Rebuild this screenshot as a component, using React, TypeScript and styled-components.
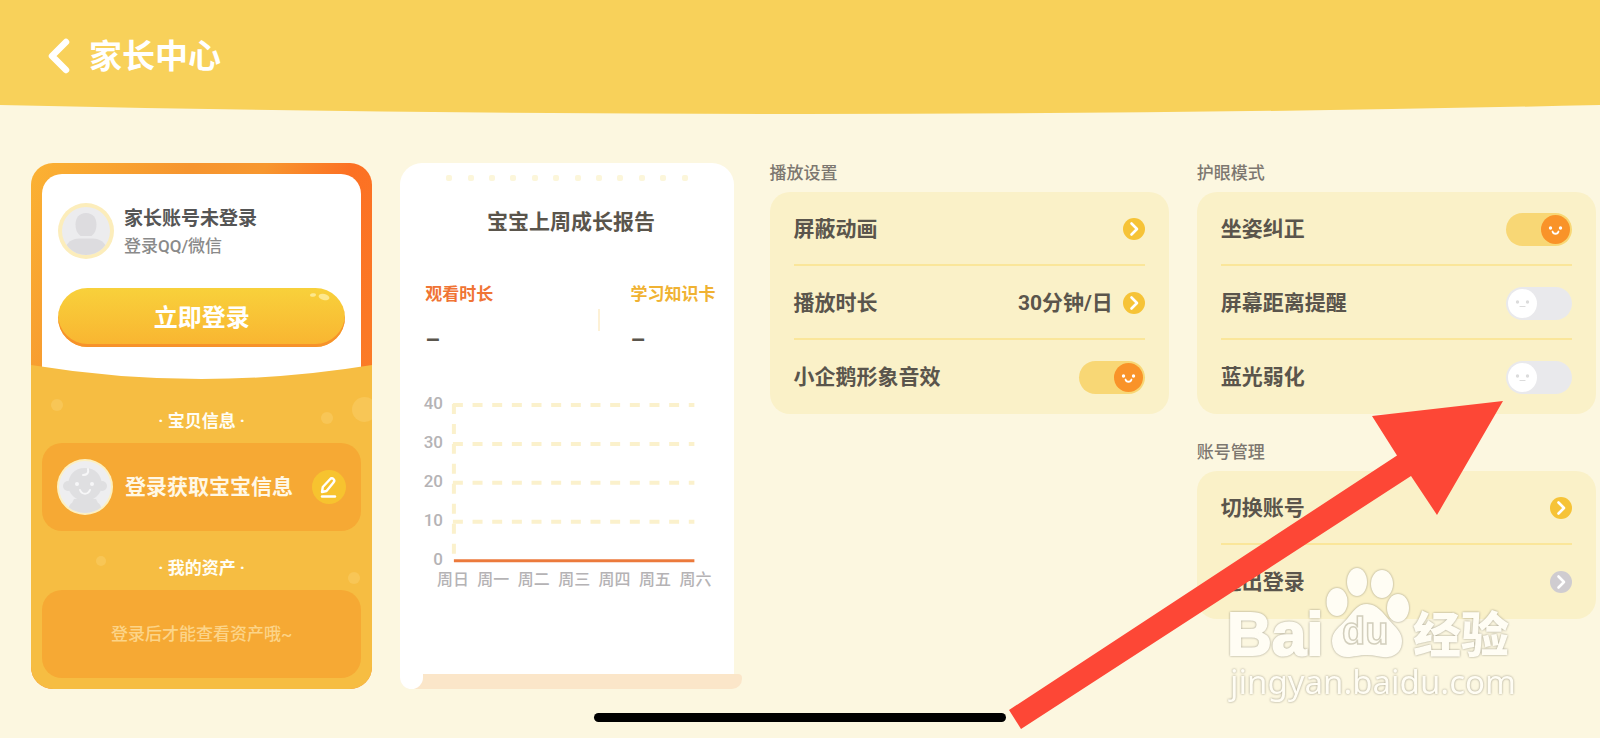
import React, { useState } from "react";
import styled, { createGlobalStyle } from "styled-components";

const GlobalStyle = createGlobalStyle`
  *, *::before, *::after { box-sizing: border-box; }
  body {
    margin: 0;
    background: #fcf7e0;
    font-family: Roboto, "Noto Sans CJK SC", sans-serif;
    color: #5a554c;
  }
  button {
    border: 0;
    padding: 0;
    margin: 0;
    background: none;
    font: inherit;
    color: inherit;
    cursor: pointer;
  }
  h1, h2, h3, p { margin: 0; }
`;

const Page = styled.div`
  position: relative;
  display: flex;
  flex-direction: column;
  min-height: 100vh;
  overflow: hidden;
`;

const Header = styled.header`
  display: flex;
  align-items: center;
  gap: 18px;
  height: 105px;
  padding: 6px 47px 0;
  background: #f8d15a;
`;

const BackButton = styled.button`
  display: flex;
`;

const PageTitle = styled.h1`
  padding-top: 3px;
  font-size: 33px;
  line-height: 40px;
  font-weight: 700;
  color: #fff;
`;

const HeaderCurve = styled.svg`
  display: block;
  width: 100%;
  height: 9px;
  fill: #f8d15a;
`;

const Columns = styled.main`
  display: grid;
  grid-template-columns: 342fr 342fr 400fr 400fr;
  column-gap: 28px;
  flex: 1;
  align-items: start;
  padding: 49px 4px 24px 31px;
`;

/* Account card */

const AccountCard = styled.section`
  overflow: hidden;
  border-radius: 22px;
  background: linear-gradient(118deg, #fbb233 0%, #f6952f 26%, #f7972f 38%, #fc7023 52%, #f98a2c 100%);
`;

const AccountPanel = styled.div`
  margin: 11px 11px 0;
  padding: 29px 16px 32px;
  border-radius: 20px 20px 0 0;
  background: #fff;
`;

const Profile = styled.div`
  display: flex;
  align-items: center;
  gap: 10px;
  margin-bottom: 29px;
`;

const ProfileText = styled.div`
  display: flex;
  flex-direction: column;
  gap: 2px;
  padding-top: 2px;
`;

const ProfileName = styled.h2`
  font-size: 19px;
  line-height: 26px;
  font-weight: 700;
  color: #555;
`;

const ProfileHint = styled.p`
  font-size: 17px;
  line-height: 24px;
  font-weight: 500;
  color: #8a8a8a;
`;

const LoginButton = styled.button`
  position: relative;
  display: block;
  width: 100%;
  height: 59px;
  border-radius: 30px;
  background: linear-gradient(#f8d13b, #f9b431);
  box-shadow: inset 0 -3px 0 #f7922b;
  font-size: 24px;
  line-height: 32px;
  font-weight: 700;
  color: #fff;
`;

const Shine = styled.svg`
  position: absolute;
  top: 3px;
  right: 14px;
`;

const CardCurve = styled.svg`
  position: relative;
  display: block;
  width: 100%;
  height: 14px;
  margin-top: -14px;
  fill: #f6bd42;
`;

const AccountBody = styled.div`
  position: relative;
  display: flex;
  flex-direction: column;
  padding: 30px 11px 11px;
  background: #f6bd42;
`;

const Bubble = styled.span<{ $x: string; $y: number; $size: number }>`
  position: absolute;
  left: ${(p) => p.$x};
  top: ${(p) => p.$y}px;
  width: ${(p) => p.$size}px;
  height: ${(p) => p.$size}px;
  border-radius: 50%;
  background: #f8c656;
`;

const BodyHeading = styled.h3`
  margin-bottom: 10px;
  text-align: center;
  font-size: 17px;
  line-height: 24px;
  font-weight: 700;
  color: #fffdf4;
`;

const BodyBox = styled.div`
  display: flex;
  align-items: center;
  height: 88px;
  padding: 0 15px;
  border-radius: 20px;
  background: #f6a934;

  & + ${BodyHeading} {
    margin-top: 25px;
  }
`;

const BabyText = styled.p`
  flex: 1;
  margin-left: 12px;
  font-size: 21px;
  line-height: 28px;
  font-weight: 700;
  color: #fff8e6;
  white-space: nowrap;
`;

const EmptyText = styled.p`
  flex: 1;
  text-align: center;
  font-size: 17px;
  line-height: 24px;
  font-weight: 500;
  color: #fcd488;
`;

const EditButton = styled.button`
  display: flex;
  align-items: center;
  justify-content: center;
  width: 34px;
  height: 34px;
  border-radius: 50%;
  background: #f7c32f;
`;

/* Report card */

const ReportCard = styled.section`
  align-self: start;
  display: flex;
  flex-direction: column;
`;

const Paper = styled.div`
  height: 511px;
  margin-right: 8px;
  padding-top: 12px;
  border-radius: 22px 22px 0 0;
  background: #fff;
`;

const PaperRoll = styled.div`
  height: 15px;
  border-radius: 0 4px 10px 12px;
  background: #fbe6c9;
`;

const PaperTab = styled.div`
  width: 23px;
  height: 15px;
  border-radius: 0 0 12px 12px;
  background: #fff;
`;

const PaperHoles = styled.div`
  display: flex;
  justify-content: space-between;
  padding: 0 46px;
`;

const Hole = styled.span`
  width: 6px;
  height: 6px;
  border-radius: 2px;
  background: #fcf6da;
`;

const ReportTitle = styled.h2`
  margin: 26px 0 45px;
  padding-left: 8px;
  text-align: center;
  font-size: 21px;
  line-height: 30px;
  font-weight: 700;
`;

const Metrics = styled.div`
  display: flex;
  padding: 0 18px 0 25px;
`;

const Metric = styled.div`
  display: flex;
  flex-direction: column;
  gap: 19px;
`;

const MetricLabel = styled.span<{ $color: string }>`
  font-size: 17px;
  line-height: 24px;
  font-weight: 700;
  color: ${(p) => p.$color};
`;

const MetricValue = styled.span`
  padding-left: 1px;
  font-family: "Liberation Sans", sans-serif;
  font-size: 24px;
  line-height: 26px;
  font-weight: 700;
`;

const MetricDivider = styled.span`
  width: 2px;
  height: 22px;
  margin: 27px 31px 0 auto;
  background: #fdf1d6;
`;

const Chart = styled.svg`
  display: block;
  width: 100%;
  margin-top: 39px;

  text {
    fill: #b5b3b5;
    font-size: 17px;
    font-weight: 500;
  }
  .day {
    font-size: 16px;
  }
`;

/* Settings */

const SettingsColumn = styled.div`
  display: flex;
  flex-direction: column;
  gap: 28px;
`;

const GroupTitle = styled.h2`
  margin-bottom: 9px;
  font-size: 17px;
  line-height: 20px;
  font-weight: 500;
  color: #7d7770;
`;

const Group = styled.div`
  padding: 0 24px;
  border-radius: 20px;
  background: #faf1c8;
`;

const rowStyle = `
  display: flex;
  align-items: center;
  gap: 10px;
  width: 100%;
  height: 74px;
  font-size: 21px;
  line-height: 28px;
  font-weight: 700;
  text-align: left;
  cursor: pointer;

  &:not(:last-child) {
    padding-top: 2px;
    border-bottom: 2px solid #fae69a;
  }
`;

const LinkRow = styled.button`
  ${rowStyle}
`;

const SwitchRow = styled.label`
  ${rowStyle}
`;

const RowLabel = styled.span`
  flex: 1;
`;

const Switch = styled.span`
  display: grid;
  width: 66px;
  height: 33px;
`;

const SwitchInput = styled.input`
  grid-area: 1 / 1;
  appearance: none;
  width: 66px;
  height: 33px;
  margin: 0;
  border-radius: 17px;
  background: #e9e9ec;
  cursor: pointer;

  &:checked {
    background: #f8d775;
  }
`;

const Knob = styled.svg<{ $on: boolean }>`
  grid-area: 1 / 1;
  align-self: center;
  justify-self: ${(p) => (p.$on ? "end" : "start")};
  margin: 0 2px;
  pointer-events: none;
`;

const HomeIndicator = styled.div`
  width: 412px;
  height: 9px;
  margin: 0 auto 16px;
  border-radius: 5px;
  background: #000;
`;

/* Overlays */

const Arrow = styled.svg`
  position: absolute;
  left: 1008px;
  top: 400px;
  pointer-events: none;
`;

const Watermark = styled.svg`
  position: absolute;
  left: 1220px;
  top: 560px;
  pointer-events: none;
  filter: drop-shadow(0 0 1px rgba(120, 116, 100, 0.7));

  text {
    fill: #fffdf4;
  }
`;

const ParentAvatar = () => (
  <svg width="56" height="56" viewBox="0 0 56 56" aria-hidden="true">
    <clipPath id="parent-clip">
      <circle cx="28" cy="28" r="24" />
    </clipPath>
    <circle cx="28" cy="28" r="28" fill="#fcedbb" />
    <circle cx="28" cy="28" r="24" fill="#ececee" />
    <g clipPath="url(#parent-clip)" fill="#dddcdf">
      <path d="M28 10c-7 0-10.500 5-10.500 11.500 0 5 1.500 9 5 11.500h11c3.500-2.500 5-6.500 5-11.500C38.500 15 35 10 28 10z" />
      <path d="M7 46c2-7 7-10 14-10.500h14c7 .5 12 3.500 14 10.500v10H7z" />
    </g>
  </svg>
);

const BabyAvatar = () => (
  <svg width="56" height="56" viewBox="0 0 56 56" aria-hidden="true">
    <clipPath id="baby-clip">
      <circle cx="28" cy="28" r="26" />
    </clipPath>
    <circle cx="28" cy="28" r="28" fill="#fdf0c0" />
    <circle cx="28" cy="28" r="26" fill="#eeeef0" />
    <g clipPath="url(#baby-clip)">
      <g fill="#dfdfe1">
        <path d="M17 40h22l2 4c4 1 4 12 4 12H11s0-11 4-12z" />
        <circle cx="11" cy="27" r="5" />
        <circle cx="45" cy="27" r="5" />
        <path d="M28 9C17 9 12 16 11 25c0 10 8 17 17 17s17-7 17-17C44 16 39 9 28 9z" />
      </g>
      <g fill="none" stroke="#f7f7f8" strokeLinecap="round" strokeWidth="2">
        <path d="M26 16c4 0 6-2 5-6" />
        <path d="M23 31c2 5 8 5 10 0" />
      </g>
      <circle cx="20" cy="25" r="2" fill="#f7f7f8" />
      <circle cx="35" cy="25" r="2" fill="#f7f7f8" />
    </g>
  </svg>
);

const ChevronBadge = ({ color = "#f6c337" }: { color?: string }) => (
  <svg width="22" height="22" viewBox="0 0 22 22" aria-hidden="true">
    <circle cx="11" cy="11" r="11" fill={color} />
    <path d="M8.500 5.500L14 11l-5.500 5.500" fill="none" stroke="#fff" strokeWidth="2.600" strokeLinecap="round" strokeLinejoin="round" />
  </svg>
);

const ToggleRow = ({ label, initial }: { label: string; initial: boolean }) => {
  const [on, setOn] = useState(initial);
  return (
    <SwitchRow>
      <RowLabel>{label}</RowLabel>
      <Switch>
        <SwitchInput type="checkbox" role="switch" checked={on} onChange={() => setOn(!on)} />
        <Knob $on={on} width="29" height="29" viewBox="0 0 29 29" aria-hidden="true">
          <circle cx="14.500" cy="14.500" r="14.500" fill={on ? "#f99329" : "#fff"} />
          <g fill={on ? "#fff" : "#dcdcdc"}>
            <circle cx="9.500" cy="13" r="1.700" />
            <circle cx="19.500" cy="13" r="1.700" />
          </g>
          <path
            d={on ? "M11.500 16.500c.8 3 5.200 3 6 0" : "M12 17.500h5"}
            fill="none"
            stroke={on ? "#fff" : "#dcdcdc"}
            strokeWidth={on ? 1.8 : 1.2}
            strokeLinecap="round"
          />
        </Knob>
      </Switch>
    </SwitchRow>
  );
};

const ticks = [40, 30, 20, 10, 0];
const days = ["周日", "周一", "周二", "周三", "周四", "周五", "周六"];

const WeekChart = () => (
  <Chart viewBox="0 0 334 210" role="img" aria-label="宝宝上周成长报告">
    {ticks.map((tick, i) => (
      <text key={tick} x="43" y={19 + i * 39} textAnchor="end">
        {tick}
      </text>
    ))}
    <g fill="none" stroke="#fbf1cc" strokeWidth="4">
      {ticks.slice(0, 4).map((tick, i) => (
        <path key={tick} d={`M53 ${15 + i * 39}H295`} strokeDasharray="10 9.700" />
      ))}
      <path d="M54 14V171" strokeDasharray="10 10" />
    </g>
    <path d="M54 171H295" stroke="#ec7a3c" strokeWidth="3" />
    {days.map((day, i) => (
      <text key={day} className="day" x={53 + i * 40.5} y="195" textAnchor="middle">
        {day}
      </text>
    ))}
  </Chart>
);

export default function App() {
  return (
    <>
      <GlobalStyle />
      <Page>
        <Header>
          <BackButton aria-label="返回">
            <svg width="24" height="36" viewBox="0 0 24 36" aria-hidden="true">
              <path d="M19 4L5 18l14 14" fill="none" stroke="#fff" strokeWidth="6.500" strokeLinecap="round" strokeLinejoin="round" />
            </svg>
          </BackButton>
          <PageTitle>家长中心</PageTitle>
        </Header>
        <HeaderCurve viewBox="0 0 1600 9" preserveAspectRatio="none" aria-hidden="true">
          <path d="M0 0Q800 18 1600 0z" />
        </HeaderCurve>

        <Columns>
          <AccountCard>
            <AccountPanel>
              <Profile>
                <ParentAvatar />
                <ProfileText>
                  <ProfileName>家长账号未登录</ProfileName>
                  <ProfileHint>登录QQ/微信</ProfileHint>
                </ProfileText>
              </Profile>
              <LoginButton>
                立即登录
                <Shine width="22" height="12" viewBox="0 0 22 12" aria-hidden="true">
                  <g fill="#fde88e">
                    <ellipse cx="15" cy="6" rx="5.500" ry="3" transform="rotate(12 15 6)" />
                    <ellipse cx="4" cy="4" rx="3" ry="1.800" transform="rotate(-8 4 4)" />
                  </g>
                </Shine>
              </LoginButton>
            </AccountPanel>
            <CardCurve viewBox="0 0 342 14" preserveAspectRatio="none" aria-hidden="true">
              <path d="M0 0Q171 28 342 0V14H0z" />
            </CardCurve>
            <AccountBody>
              <Bubble $x="6%" $y={20} $size={12} />
              <Bubble $x="85%" $y={33} $size={12} />
              <Bubble $x="94%" $y={18} $size={25} />
              <Bubble $x="19%" $y={177} $size={10} />
              <Bubble $x="93%" $y={193} $size={12} />
              <BodyHeading>· 宝贝信息 ·</BodyHeading>
              <BodyBox>
                <BabyAvatar />
                <BabyText>登录获取宝宝信息</BabyText>
                <EditButton aria-label="编辑">
                  <svg width="20" height="22" viewBox="0 0 20 22" aria-hidden="true">
                    <g fill="none" stroke="#fff" strokeWidth="2.400" strokeLinecap="round" strokeLinejoin="round">
                      <path d="M3 16l.8-5L11 3.200c1-1.200 2.500-1.200 3.500-.2s1 2.300 0 3.400L7.500 15z" />
                      <path d="M3 20.500h13" />
                    </g>
                  </svg>
                </EditButton>
              </BodyBox>
              <BodyHeading>· 我的资产 ·</BodyHeading>
              <BodyBox>
                <EmptyText>登录后才能查看资产哦~</EmptyText>
              </BodyBox>
            </AccountBody>
          </AccountCard>

          <ReportCard>
            <Paper>
              <PaperHoles>
                {Array.from({ length: 12 }, (_, i) => (
                  <Hole key={i} />
                ))}
              </PaperHoles>
              <ReportTitle>宝宝上周成长报告</ReportTitle>
              <Metrics>
                <Metric>
                  <MetricLabel $color="#f07434">观看时长</MetricLabel>
                  <MetricValue>–</MetricValue>
                </Metric>
                <MetricDivider />
                <Metric>
                  <MetricLabel $color="#f0b232">学习知识卡</MetricLabel>
                  <MetricValue>–</MetricValue>
                </Metric>
              </Metrics>
              <WeekChart />
            </Paper>
            <PaperRoll>
              <PaperTab />
            </PaperRoll>
          </ReportCard>

          <SettingsColumn>
            <section>
              <GroupTitle>播放设置</GroupTitle>
              <Group>
                <LinkRow>
                  <RowLabel>屏蔽动画</RowLabel>
                  <ChevronBadge />
                </LinkRow>
                <LinkRow>
                  <RowLabel>播放时长</RowLabel>
                  <span>30分钟/日</span>
                  <ChevronBadge />
                </LinkRow>
                <ToggleRow label="小企鹅形象音效" initial />
              </Group>
            </section>
          </SettingsColumn>

          <SettingsColumn>
            <section>
              <GroupTitle>护眼模式</GroupTitle>
              <Group>
                <ToggleRow label="坐姿纠正" initial />
                <ToggleRow label="屏幕距离提醒" initial={false} />
                <ToggleRow label="蓝光弱化" initial={false} />
              </Group>
            </section>
            <section>
              <GroupTitle>账号管理</GroupTitle>
              <Group>
                <LinkRow>
                  <RowLabel>切换账号</RowLabel>
                  <ChevronBadge />
                </LinkRow>
                <LinkRow>
                  <RowLabel>退出登录</RowLabel>
                  <ChevronBadge color="#cfccd0" />
                </LinkRow>
              </Group>
            </section>
          </SettingsColumn>
        </Columns>

        <HomeIndicator />

        <Arrow width="496" height="330" viewBox="0 0 496 330" aria-hidden="true">
          <path d="M1 310L389 55.500 364 16 495 1 429 115 403 76 13 329z" fill="#fd4736" />
        </Arrow>

        <Watermark width="310" height="160" viewBox="0 0 310 160" aria-hidden="true">
          <text
            x="7"
            y="95"
            fontSize="62"
            fontFamily="Liberation Sans, sans-serif"
            fontWeight="700"
            stroke="#fffdf4"
            strokeWidth="2"
          >
            Bai
          </text>
          <g fill="#fffdf4">
            <ellipse cx="117" cy="42" rx="10.500" ry="14" />
            <ellipse cx="137" cy="22" rx="10" ry="14" />
            <ellipse cx="162" cy="24" rx="11" ry="14" />
            <ellipse cx="178" cy="48" rx="11" ry="14" />
            <path d="M147 44c-10 0-14 8-20 15-7 8-15 12-15 22 0 9 6 16 15 16 7 0 12-2 20-2s14 3 21 2c9-1 14-7 14-16 0-9-7-14-13-21s-12-16-22-16z" />
          </g>
          <text
            x="122"
            y="84"
            fontSize="38"
            fontFamily="Liberation Sans, sans-serif"
            fontWeight="700"
            stroke="#d3cfbd"
            strokeWidth="1.500"
          >
            du
          </text>
          <text x="193" y="92" fontSize="48" fontFamily="Noto Sans CJK SC, sans-serif" fontWeight="900">
            经验
          </text>
          <text x="10" y="134" fontSize="33" fontFamily="Noto Sans, sans-serif">
            jingyan.baidu.com
          </text>
        </Watermark>
      </Page>
    </>
  );
}
